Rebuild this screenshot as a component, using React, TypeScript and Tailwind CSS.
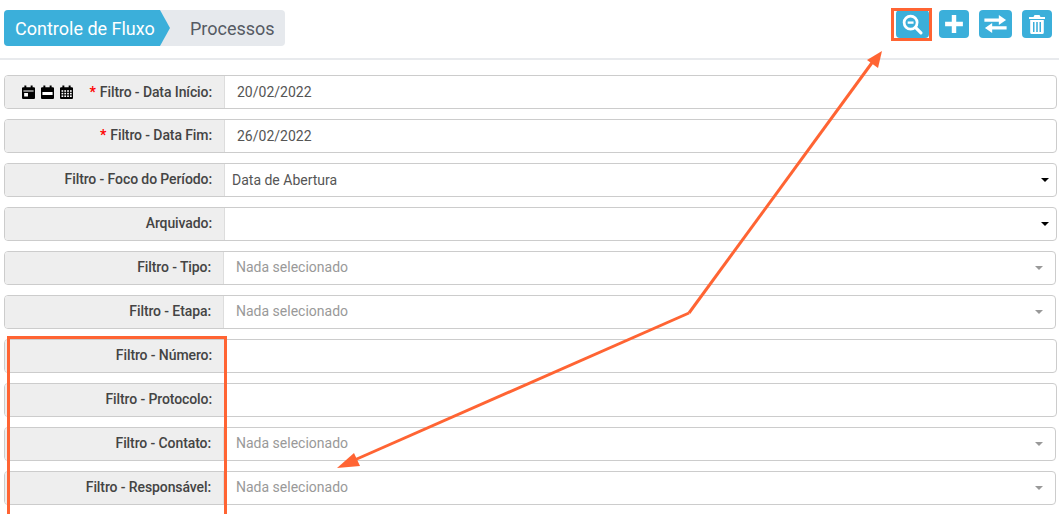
import React from "react";

function Caret({ muted }: { muted?: boolean }) {
  return (
    <span
      className={
        "h-0 w-0 border-x-[4px] border-t-[4px] border-x-transparent " +
        (muted ? "border-t-[#999999]" : "border-t-black")
      }
    />
  );
}

type RowProps = {
  label: string;
  required?: boolean;
  value?: string;
  kind?: "date" | "native" | "picker" | "text";
  icons?: boolean;
};

function CalIcon({ variant }: { variant: number }) {
  return (
    <svg width="13" height="14" viewBox="0 0 12 14" preserveAspectRatio="none" className="shrink-0">
      <rect x="2.2" y="0.5" width="1.8" height="3" fill="#000" />
      <rect x="8" y="0.5" width="1.8" height="3" fill="#000" />
      <path d="M0 3.2a1 1 0 0 1 1-1h10a1 1 0 0 1 1 1V13a1 1 0 0 1-1 1H1a1 1 0 0 1-1-1z" fill="#000" />
      {variant === 0 && <rect x="1.3" y="5.500" width="9.400" height="1" fill="#fff" />}
      {variant === 0 && <rect x="2" y="8" width="3.500" height="3.500" fill="#fff" />}
      {variant === 1 && <rect x="1.3" y="7" width="9.400" height="3" fill="#fff" />}
      {variant === 2 &&
        [5.2, 7.8, 10.4].flatMap((y) =>
          [1.4, 4, 6.6, 9.2].map((x) => <rect key={x + "-" + y} x={x} y={y} width="1.600" height="1.600" fill="#fff" />)
        )}
    </svg>
  );
}

function Row({ label, required, value, kind = "text", icons }: RowProps) {
  const wide = kind === "date" || kind === "native" || kind === "text";
  return (
    <div
      className={
        "flex h-[34px] overflow-hidden rounded-[4px] border border-[#cccccc] bg-white " +
        (kind === "picker" ? "w-[1052px]" : "w-[1053px]")
      }
    >
      <div
        className={
          "flex shrink-0 items-center justify-end border-r border-[#dddddd] bg-[#eeeeee] pr-[12px] text-[14px] font-medium tracking-[-0.1px] text-[#444444] " +
          (wide ? "w-[220px] " : "w-[219px] ") +
          (icons ? "" : "pb-[2px]")
        }
      >
        {icons && (
          <span className="mr-[17px] flex gap-[6px]">
            <CalIcon variant={0} />
            <CalIcon variant={1} />
            <CalIcon variant={2} />
          </span>
        )}
        {required && <span className="mr-[4px] font-bold text-[#ff0000]">*</span>}
        {label}
      </div>
      <div className="flex flex-1 items-center justify-between text-[14px] text-[#555555]">
        {kind === "date" && <span className="pl-[12px]">{value}</span>}
        {kind === "native" && (
          <>
            <span className="pl-[7px]">{value}</span>
            <span className="mr-[7px] flex"><Caret /></span>
          </>
        )}
        {kind === "picker" && (
          <>
            <span className="-mt-[2px] pl-[12px] text-[#999999]">Nada selecionado</span>
            <span className="mr-[12px] flex"><Caret muted /></span>
          </>
        )}
      </div>
    </div>
  );
}

function ActionButton({ children, w }: { children: React.ReactNode; w: string }) {
  return (
    <button className={"flex h-[28px] items-center justify-center rounded-[4px] bg-[#3bafda] text-white " + w}>
      {children}
    </button>
  );
}

export default function App() {
  return (
    <div className="relative h-[514px] w-[1059px] overflow-hidden bg-white font-['Roboto',sans-serif]">
      <header className="flex h-[60px] items-start justify-between border-b-2 border-[#e8eaed] pl-[4px] pr-[7px] pt-[10px]">
        <nav className="flex h-[36px] w-[281px] overflow-hidden rounded-[4px] bg-[#e6e9ed] text-[18px]">
          <span className="flex w-[166px] items-center bg-[#3bafda] pl-[11px] text-white [clip-path:polygon(0_0,156px_0,100%_50%,156px_100%,0_100%)]">
            Controle de Fluxo
          </span>
          <span className="flex items-center pl-[20px] text-[#555a63]">Processos</span>
        </nav>
        <div className="flex gap-[10px]">
          <ActionButton w="w-[33px]">
            <svg width="21" height="21" viewBox="0 0 20 20" fill="none" stroke="#fff" strokeWidth="2.600" strokeLinecap="round">
              <circle cx="8.200" cy="8.200" r="6.200" />
              <path d="M5.400 8.200h5.600" strokeWidth="2.200" strokeLinecap="butt" />
              <path d="M13 13l5 5" strokeWidth="3" />
            </svg>
          </ActionButton>
          <ActionButton w="w-[30px]">
            <svg width="20" height="20" viewBox="0 0 18 18" fill="#fff">
              <path d="M7 1h4v6h6v4h-6v6H7v-6H1V7h6z" />
            </svg>
          </ActionButton>
          <ActionButton w="w-[33px]">
            <svg width="25" height="20" viewBox="0 0 22 18" fill="#fff">
              <path d="M1 4h13V1l6.500 4.500L14 10V7H1z" />
              <path d="M21 11H8V8L1.500 12.500 8 17v-3h13z" />
            </svg>
          </ActionButton>
          <ActionButton w="w-[30px]">
            <svg width="18" height="21" viewBox="0 0 18 20" fill="#fff">
              <path d="M6.500 0.500h5L12.500 2.500H17V4.500H1V2.500H5.500z" />
              <path fillRule="evenodd" d="M2.200 5.500h13.600V18a1.500 1.500 0 0 1-1.500 1.500H3.700A1.500 1.500 0 0 1 2.200 18zM5 7.500v10h1.500v-10zM8.200 7.500v10h1.600v-10zM11.500 7.500v10H13v-10z" />
            </svg>
          </ActionButton>
        </div>
      </header>

      <main className="flex flex-col gap-[10px] pl-[4px] pt-[15px]">
        <Row label="Filtro - Data Início:" required icons kind="date" value="20/02/2022" />
        <Row label="Filtro - Data Fim:" required kind="date" value="26/02/2022" />
        <Row label="Filtro - Foco do Período:" kind="native" value="Data de Abertura" />
        <Row label="Arquivado:" kind="native" />
        <Row label="Filtro - Tipo:" kind="picker" />
        <Row label="Filtro - Etapa:" kind="picker" />
        <Row label="Filtro - Número:" />
        <Row label="Filtro - Protocolo:" />
        <Row label="Filtro - Contato:" kind="picker" />
        <Row label="Filtro - Responsável:" kind="picker" />
      </main>

      {/* annotations drawn over the screenshot */}
      <div className="absolute left-[891px] top-[8px] h-[33px] w-[41px] border-[3px] border-[#ff6433]" />
      <div className="absolute left-[7px] top-[336px] h-[190px] w-[220px] border-[3px] border-[#ff6433]" />
      <svg className="absolute left-0 top-0" width="1059" height="514" fill="none">
        <path d="M689 313L874 60" stroke="#ff6433" strokeWidth="3" />
        <path d="M689 313L350 462" stroke="#ff6433" strokeWidth="3" />
        <path d="M882 51L867 60L878 68z" fill="#ff6433" />
        <path d="M337 468L354 453L360 466z" fill="#ff6433" />
      </svg>
    </div>
  );
}
